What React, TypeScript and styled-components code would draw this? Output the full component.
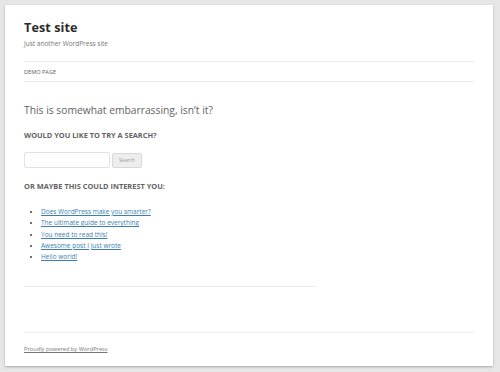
import React from "react";
import styled, { createGlobalStyle } from "styled-components";

const GlobalStyle = createGlobalStyle`
  html, body {
    margin: 0;
    padding: 0;
    background: #e6e6e6;
  }
  body {
    font-family: "Open Sans", "Liberation Sans", sans-serif;
    padding: 5px 7px 6px 5px;
  }
`;

const posts = [
  "Does WordPress make you smarter?",
  "The ultimate guide to everything",
  "You need to read this!",
  "Awesome post I just wrote",
  "Hello world!",
];

const App: React.FC = () => {
  return (
    <>
      <GlobalStyle />
      <Page>
        <Header>
          <SiteTitle>Test site</SiteTitle>
          <Tagline>Just another WordPress site</Tagline>
        </Header>
        <Nav>
          <NavItem>Demo Page</NavItem>
        </Nav>
        <Main>
          <Title>This is somewhat embarrassing, isn’t it?</Title>
          <Subtitle>Would you like to try a search?</Subtitle>
          <SearchForm>
            <SearchInput type="text" />
            <SearchButton type="button">Search</SearchButton>
          </SearchForm>
          <Subtitle>Or maybe this could interest you:</Subtitle>
          <PostList>
            {posts.map((p) => (
              <li key={p}>
                <PostLink href="#">{p}</PostLink>
              </li>
            ))}
          </PostList>
          <Rule />
        </Main>
        <Footer>
          <FooterLink href="#">Proudly powered by WordPress</FooterLink>
        </Footer>
      </Page>
    </>
  );
};

export default App;

const Page = styled.div`
  background: #fff;
  width: 488px;
  height: 361px;
  box-sizing: border-box;
  padding: 0 19px;
  box-shadow: 0 1px 2px rgba(60, 60, 60, 0.35);
  display: flex;
  flex-direction: column;
  font-size: 7px;
  line-height: 10px;
`;

const Header = styled.header`
  padding-top: 15px;
`;

const SiteTitle = styled.h1`
  margin: 0;
  font-size: 12.6px;
  font-weight: 700;
  line-height: 16px;
  letter-spacing: 0.1px;
  color: #2b2b2b;
`;

const Tagline = styled.div`
  margin-top: 3px;
  font-size: 6.5px;
  line-height: 10px;
  color: #757575;
`;

const Nav = styled.nav`
  margin-top: 12px;
  border-top: 1px solid #ededed;
  border-bottom: 1px solid #ededed;
  height: 19px;
  display: flex;
  align-items: center;
`;

const NavItem = styled.span`
  font-size: 5.6px;
  line-height: 10px;
  text-transform: uppercase;
  color: #5e5e5e;
`;

const Main = styled.main`
  padding-top: 19px;
  display: flex;
  flex-direction: column;
  align-items: flex-start;
`;

const Title = styled.h2`
  margin: 0;
  font-size: 10.3px;
  font-weight: 400;
  line-height: 18px;
  color: #636363;
`;

const Subtitle = styled.h3`
  margin: 10px 0 0;
  font-size: 7.4px;
  font-weight: 700;
  line-height: 12px;
  text-transform: uppercase;
  color: #636363;
`;

const SearchForm = styled.div`
  margin: 11px 0 2px;
  display: flex;
  align-items: center;
  gap: 2px;
`;

const SearchInput = styled.input`
  box-sizing: border-box;
  width: 86px;
  height: 16px;
  margin: 0;
  border: 1px solid #e2e2e2;
  border-radius: 2px;
  padding: 0;
  background: #fff;
`;

const SearchButton = styled.button`
  box-sizing: border-box;
  width: 30px;
  height: 15px;
  margin: 0;
  padding: 0;
  border: 1px solid #d8d8d8;
  border-radius: 2px;
  background: #ededed;
  font-family: inherit;
  font-size: 5px;
  color: #999;
`;

const PostList = styled.ul`
  margin: 14px 0 0;
  padding-left: 17px;
  list-style: disc;
  font-size: 6.5px;
  line-height: 11.3px;
  color: #444;
`;

const PostLink = styled.a`
  color: #3a7fae;
  text-decoration: underline;
`;

const Rule = styled.hr`
  margin: 24px 0 0;
  width: 293px;
  border: 0;
  border-top: 1px solid #ededed;
`;

const Footer = styled.footer`
  margin-top: auto;
  margin-bottom: 12px;
  border-top: 1px solid #ededed;
  padding-top: 11px;
  line-height: 10px;
`;

const FooterLink = styled.a`
  font-size: 5.7px;
  color: #777;
  text-decoration: underline;
`;
